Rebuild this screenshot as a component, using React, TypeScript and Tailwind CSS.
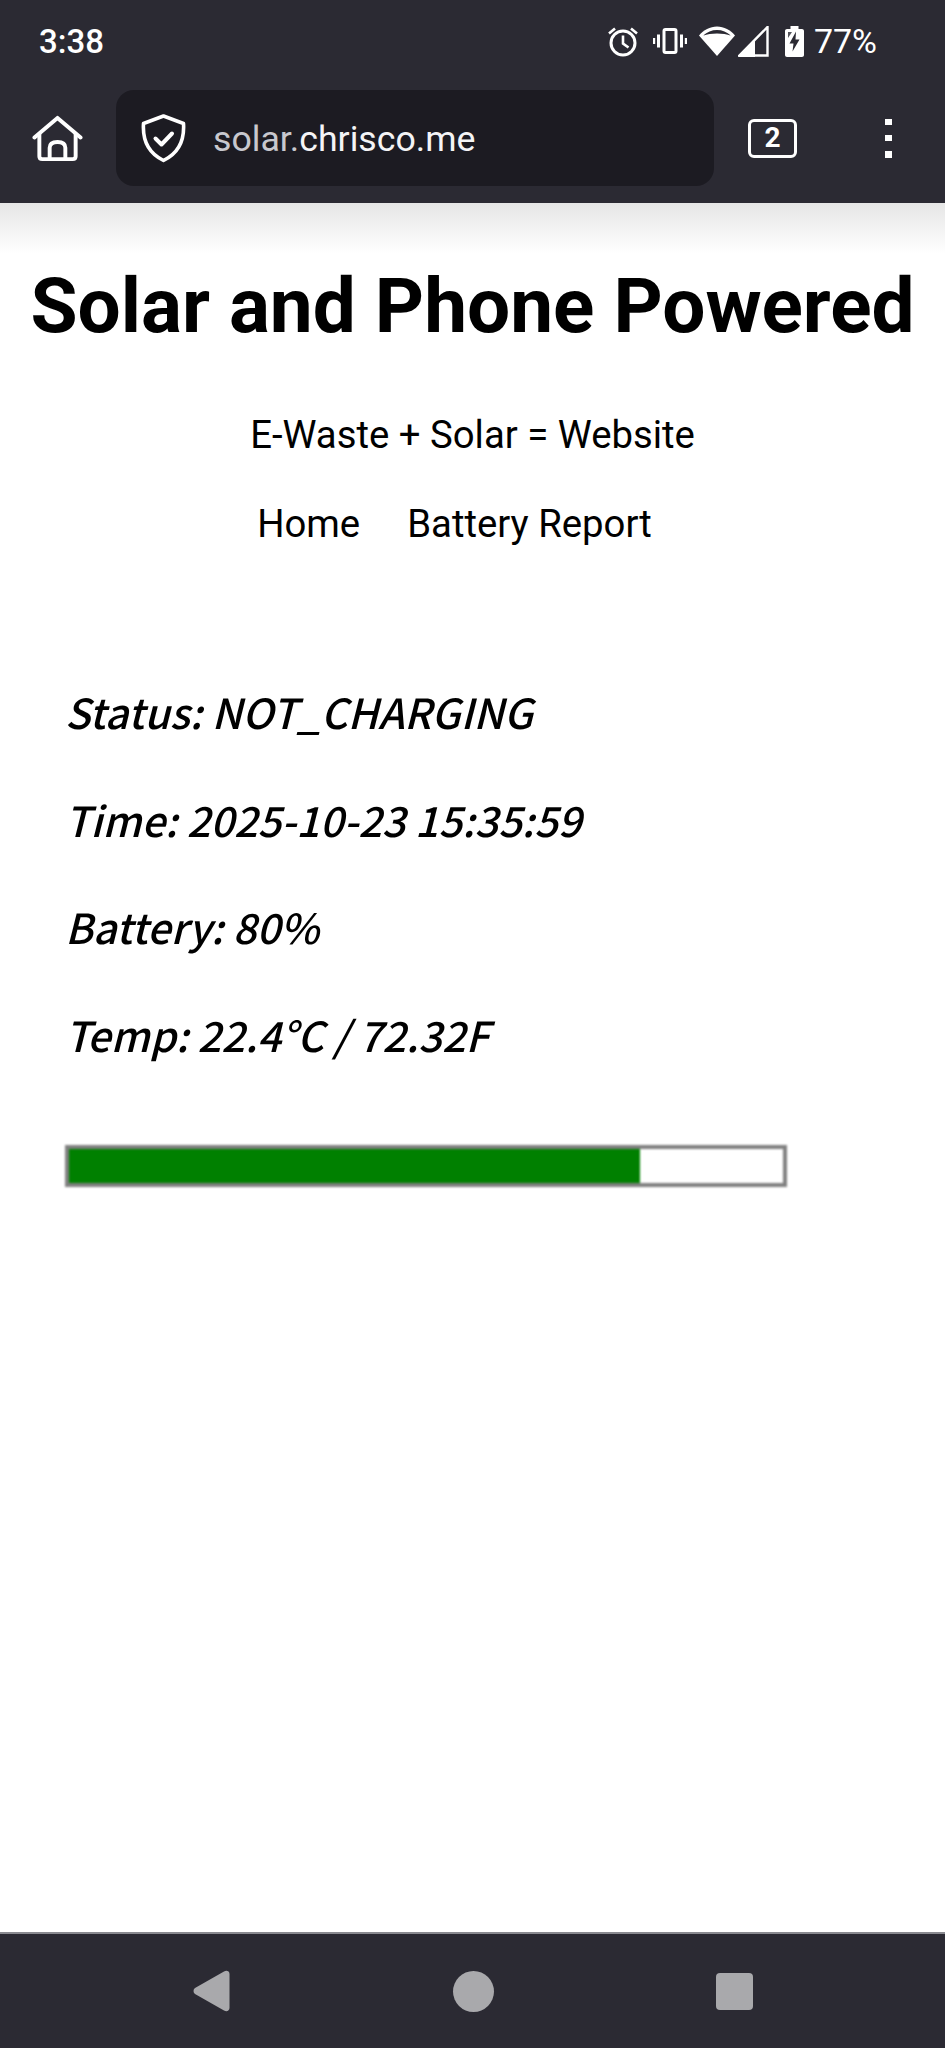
import React from "react";

function Alarm() {
  return (
    <svg width="32" height="32" viewBox="0 0 32 32" fill="none" stroke="white" strokeWidth="3">
      <circle cx="16" cy="18" r="12" />
      <path d="M16 10.5V18.5L21.5 22.5" strokeWidth="2.6" />
      <path d="M2 8.5L8 3.5M30 8.5L24 3.5" strokeWidth="2.6" />
    </svg>
  );
}

function Vibrate() {
  return (
    <svg width="34" height="26" viewBox="0 0 34 26" fill="none" stroke="white">
      <rect x="11" y="1.5" width="12" height="23" rx="1.5" strokeWidth="3" />
      <path d="M5.5 6.5V19.5M28.5 6.5V19.5" strokeWidth="3" />
      <path d="M1 10V16M33 10V16" strokeWidth="2.4" />
    </svg>
  );
}

function Wifi() {
  return (
    <svg width="36" height="30" viewBox="0 0 36 30" fill="white">
      <path d="M18 30L0 9.5C4.5 4 11 0.5 18 0.5C25 0.5 31.5 4 36 9.5L18 30Z" />
      <path d="M4.2 9.6C8 6 12.8 4 18 4C23.2 4 28 6 31.8 9.6C28 8.2 23.2 7.4 18 7.4C12.8 7.4 8 8.2 4.2 9.6Z" fill="#2b2a33" />
    </svg>
  );
}

function Signal() {
  return (
    <svg width="31" height="31" viewBox="0 0 31 31" fill="none">
      <path d="M29.5 1V29.5H1.5L29.5 1Z" stroke="white" strokeWidth="2.4" strokeLinejoin="miter" />
      <path d="M0 31L17 14V31H0Z" fill="white" />
    </svg>
  );
}

function Battery() {
  return (
    <svg width="19" height="31" viewBox="0 0 19 31">
      <path d="M5.5 0H13.5V3H17C18.1 3 19 3.9 19 5V29C19 30.1 18.1 31 17 31H2C0.9 31 0 30.1 0 29V5C0 3.9 0.9 3 2 3H5.5V0Z" fill="white" />
      <path d="M11 5.5L4.5 17.5H8.5L7.5 25.5L14.5 13.5H10.5L11 5.5Z" fill="#2b2a33" />
      <path d="M3 6H7L3 12V6Z" fill="#2b2a33" opacity="0.8" />
    </svg>
  );
}

function HomeIcon() {
  return (
    <svg width="52" height="47" viewBox="0 0 52 47" fill="none" stroke="white" strokeWidth="4" strokeLinejoin="round" strokeLinecap="round">
      <path d="M2.5 22.5L26 2.5L49.5 22.5" />
      <path d="M7.5 19V41.5C7.5 43.5 8.5 44.5 10.5 44.5H41.5C43.5 44.5 44.5 43.5 44.5 41.5V19" />
      <path d="M18 44V33C18 29 21 27 26 27C31 27 34 29 34 33V44" />
    </svg>
  );
}

function Shield() {
  return (
    <svg width="45" height="49" viewBox="0 0 45 49" fill="none" stroke="white" strokeLinejoin="round" strokeLinecap="round">
      <path d="M22.5 2L42.5 9.5C43.5 25 38 39 22.5 46.5C7 39 1.5 25 2.5 9.5L22.5 2Z" strokeWidth="3.6" />
      <path d="M14.5 24.5L20.5 30.5L31 19.5" strokeWidth="4" />
    </svg>
  );
}

const stats = [
  "Status: NOT_CHARGING",
  "Time: 2025-10-23 15:35:59",
  "Battery: 80%",
  "Temp: 22.4°C / 72.32F",
];

export default function App() {
  return (
    <div className="flex h-[2048px] flex-col bg-white font-['Roboto',sans-serif] text-black">
      <header className="relative h-[206px] shrink-0 border-b-[3px] border-[#4c4b53] bg-[#2b2a33]">
        <div className="flex h-[84px] items-center justify-between pl-[39px] pr-[68px] pb-[2px] text-[33px] font-medium leading-none text-white">
          <span>3:38</span>
          <div className="flex items-center">
            <Alarm />
            <span className="ml-[14px]"><Vibrate /></span>
            <span className="ml-[12px]"><Wifi /></span>
            <span className="ml-[3px]"><Signal /></span>
            <span className="ml-[16px]"><Battery /></span>
            <span className="ml-[10px] text-[34px] font-normal">77%</span>
          </div>
        </div>
        <div className="mt-[6px] flex h-[96px] items-center">
          <div className="ml-[32px] flex w-[51px] justify-center"><HomeIcon /></div>
          <div className="ml-[33px] flex h-[96px] w-[598px] items-center rounded-[18px] bg-[#1c1b22] pl-[25px]">
            <Shield />
            <span className="ml-[27px] pt-[3px] text-[35.7px] leading-none text-[#f4f4f6]">
              <span className="text-[#c8c8ce]">solar.</span>chrisco.me
            </span>
          </div>
          <div className="ml-[34px] flex h-[39px] w-[49px] items-center justify-center rounded-[6px] border-[3px] border-white text-[28px] font-bold leading-none text-white">2</div>
          <div className="ml-[88px] flex h-[39px] flex-col justify-between">
            <div className="size-[6.5px] bg-white" />
            <div className="size-[6.5px] bg-white" />
            <div className="size-[6.5px] bg-white" />
          </div>
        </div>
        <div className="absolute inset-x-0 top-full h-[50px] bg-gradient-to-b from-[#e6e6e6] to-white" />
      </header>

      <main className="relative flex-1 overflow-hidden">
        <h1 className="mt-[62px] text-center text-[76.5px] font-bold leading-none">Solar and Phone Powered</h1>
        <p className="mt-[71px] text-center text-[38.3px] leading-none">E-Waste + Solar = Website</p>
        <nav className="mt-[51px] flex justify-center gap-[47px] pr-[36px] text-[38.3px] leading-none">
          <span>Home</span>
          <span>Battery Report</span>
        </nav>
        <div className="mt-[146px] flex flex-col gap-[62.5px] pl-[65px] font-['Noto_Sans_CJK_SC',sans-serif] text-[41.5px] font-medium italic leading-[45px] blur-[0.6px]">
          {stats.map((s) => (
            <p key={s}>{s}</p>
          ))}
        </div>
        <div className="ml-[65px] mt-[88.5px] h-[42px] w-[722px] border-4 border-[#808080] blur-[0.8px]">
          <div className="h-full w-[80%] bg-[#008000]" />
        </div>
      </main>

      <footer className="flex h-[116px] shrink-0 items-center border-t-2 border-[#8a8a90] bg-[#2b2a33]">
        <svg className="ml-[193px]" width="38" height="42" viewBox="0 0 38 42" fill="#a9a9ac">
          <path d="M36.5 4C36.5 1 33.5 0 31 1.5L2 18C0 19.5 0 22.5 2 24L31 40.5C33.5 42 36.5 41 36.5 38V4Z" />
        </svg>
        <div className="ml-[222px] h-[41px] w-[41px] rounded-full bg-[#a9a9ac]" />
        <div className="ml-[222px] h-[37px] w-[37px] rounded-[4px] bg-[#a9a9ac]" />
      </footer>
    </div>
  );
}
